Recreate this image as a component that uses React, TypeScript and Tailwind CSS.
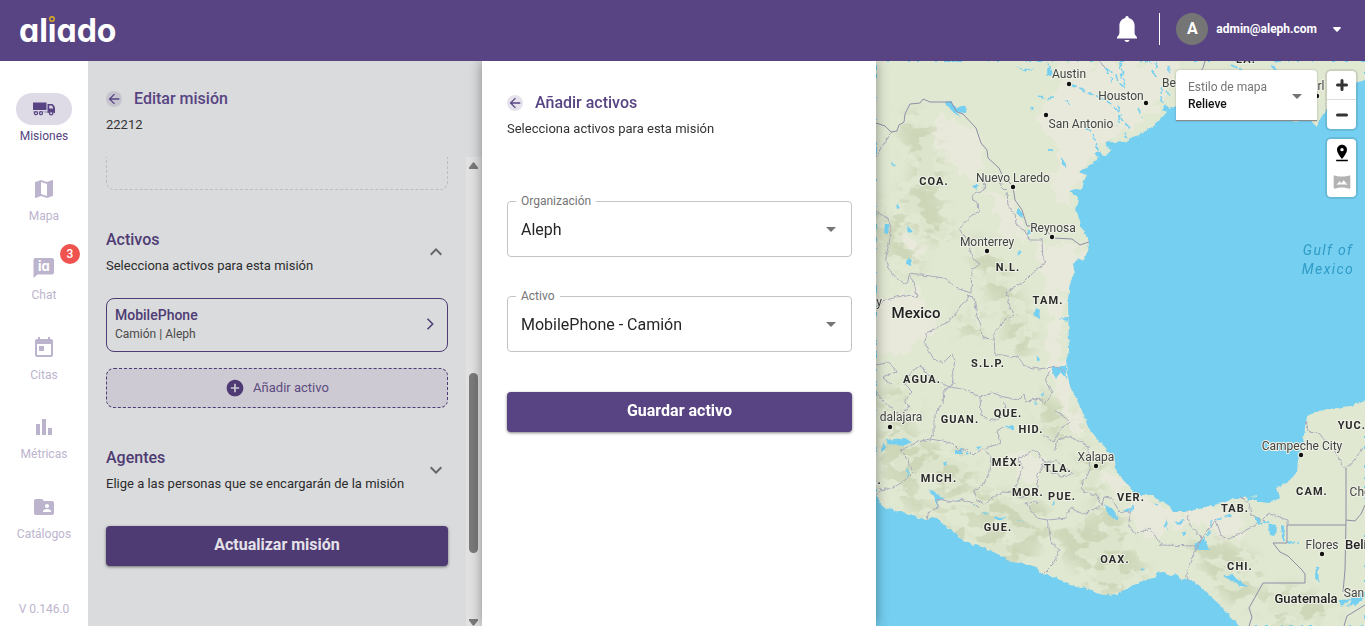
import React, { useState } from 'react'
import {
  MdAddCircle,
  MdArrowBack,
  MdArrowDropDown,
  MdBarChart,
  MdExpandLess,
  MdExpandMore,
  MdFolderShared,
  MdMap,
  MdPinDrop,
  MdToday,
  MdVrpano
} from 'react-icons/md'

const TruckIcon = () => (
  <svg viewBox="0 0 24 16" className="w-6 h-4" fill="currentColor">
    <path d="M1 1.500h13.500V9H1z" />
    <path d="M15.500 3h4.200c1.600 0 3.300 2.600 3.300 4.600V12h-1.200a2.800 2.800 0 0 0-5.200 0h-1.100zm1.800 1.400v3h4c-.3-1.500-1.200-3-2-3z" fillRule="evenodd" />
    <path d="M1 10h14.500v2H13a2.400 2.400 0 0 0-3.800-.8 2.400 2.400 0 0 0-3.400 0A2.400 2.400 0 0 0 2 12H1z" opacity="0.3" />
    <g fill="none" stroke="currentColor" strokeWidth="1.300">
      <circle cx="4" cy="12.200" r="1.500" />
      <circle cx="9" cy="12.200" r="1.500" />
      <circle cx="19.200" cy="12.200" r="1.700" />
    </g>
  </svg>
)

const ChatIcon = () => (
  <svg viewBox="0 0 22 20" className="w-[22px] h-5" fill="currentColor">
    <path d="M2 0h17a2 2 0 0 1 2 2v12.500a2 2 0 0 1-2 2H4.500L.5 20V2A2 2 0 0 1 2 0z" />
    <text x="10.800" y="12.500" textAnchor="middle" className="fill-white font-['Inter',sans-serif] text-[13px] font-bold [font-feature-settings:'cv11']">ia</text>
  </svg>
)

const BellIcon = () => (
  <svg viewBox="0 0 20 26" className="w-5 h-[26px]" fill="currentColor">
    <path d="M10 0c1.100 0 1.700.8 1.700 1.900 3.600.9 5.900 3.700 5.900 7.600v7.500c0 1.600.9 2.500 2.400 4.300V22.500H0v-1.200C1.500 19.500 2.400 18.600 2.400 17V9.500c0-3.900 2.300-6.700 5.900-7.600C8.300.8 8.900 0 10 0z" />
    <path d="M7.500 24h5c-.3 1.200-1.300 2-2.500 2s-2.200-.8-2.500-2z" />
  </svg>
)

const navItems = [
  { id: 'misiones', label: 'Misiones', icon: <TruckIcon /> },
  { id: 'mapa', label: 'Mapa', icon: <MdMap className="w-6 h-6" /> },
  { id: 'chat', label: 'Chat', icon: <ChatIcon />, badge: 3 },
  { id: 'citas', label: 'Citas', icon: <MdToday className="w-6 h-6" /> },
  { id: 'metricas', label: 'Métricas', icon: <MdBarChart className="w-6 h-6" /> },
  { id: 'catalogos', label: 'Catálogos', icon: <MdFolderShared className="w-6 h-6" /> }
]

const Header = () => (
  <header className="h-[61px] shrink-0 bg-[#584482] text-white flex items-center justify-between pl-[19px] pr-6">
    <a href="#" className="font-['Inter',sans-serif] text-[32px] leading-10 font-bold [font-feature-settings:'cv11']">
      al
      <span className="relative">
        i
        <svg viewBox="0 0 8 8" className="absolute top-1 left-0 w-2 h-2">
          <rect width="8" height="8" fill="#584482" />
          <circle cx="4" cy="4" r="2.200" fill="none" stroke="#e0b020" strokeWidth="1.400" />
        </svg>
      </span>
      ado
    </a>
    <div className="flex items-center pb-[3px]">
      <button aria-label="Notificaciones">
        <BellIcon />
      </button>
      <div className="w-px h-8 bg-white ml-[22px] mr-4" />
      <button className="flex items-center">
        <span className="w-8 h-8 rounded-full bg-[#757575] flex items-center justify-center text-base font-bold mr-2">A</span>
        <span className="text-xs font-bold mr-4">admin@aleph.com</span>
        <svg viewBox="0 0 8 5" className="w-2 h-[5px]" fill="currentColor">
          <path d="M.8 0h6.400c.7 0 1 .7.500 1.200L4.600 4.600a.8.8 0 0 1-1.200 0L.3 1.200C-.2.7.1 0 .8 0z" />
        </svg>
      </button>
    </div>
  </header>
)

const Sidebar = ({ active }: { active: string }) => (
  <aside className="w-[88px] shrink-0 bg-white flex flex-col items-center pt-8 pb-[7px]">
    <nav className="flex-1 flex flex-col justify-between mb-[54px]">
      {navItems.map((item) => (
        <a
          key={item.id}
          href={`#${item.id}`}
          className={`flex flex-col items-center text-xs leading-[22px] ${
            item.id === active ? 'text-[#584482]' : 'text-[#bcb4cd]'
          }`}
        >
          <span
            className={`relative w-14 h-8 rounded-full flex items-center justify-center ${
              item.id === active ? 'bg-[#dedae6]' : ''
            }`}
          >
            {item.icon}
            {item.badge && (
              <span className="absolute -top-2 -right-2 w-5 h-5 rounded-full bg-[#ef5350] text-white text-xs font-medium leading-5 text-center">
                {item.badge}
              </span>
            )}
          </span>
          {item.label}
        </a>
      ))}
    </nav>
    <span className="text-xs leading-5 text-[#bcb4cd]">V 0.146.0</span>
  </aside>
)

const PanelTitle = ({ title, subtitle }: { title: string; subtitle: string }) => (
  <div>
    <div className="flex items-center gap-3 h-6">
      <button aria-label="Regresar" className="w-4 h-4 rounded-full bg-[#584482]/15 flex items-center justify-center text-[#584482]">
        <MdArrowBack className="w-4 h-4" />
      </button>
      <h2 className="text-base leading-6 font-medium text-[#584482]">{title}</h2>
    </div>
    <p className="mt-1 text-[13px] leading-5 text-[#333]">{subtitle}</p>
  </div>
)

interface SectionProps {
  title: string
  subtitle: string
  open: boolean
  onToggle: () => void
}

const SectionHeader = ({ title, subtitle, open, onToggle }: SectionProps) => (
  <button onClick={onToggle} aria-expanded={open} className="w-full flex items-center justify-between text-left mt-[38px]">
    <span>
      <span className="block text-base leading-6 font-medium text-[#4e3b73]">{title}</span>
      <span className="block mt-1 text-[13px] leading-5 text-[#2c2c2c]">{subtitle}</span>
    </span>
    {open ? <MdExpandLess className="w-6 h-6 text-[#666]" /> : <MdExpandMore className="w-6 h-6 text-[#666]" />}
  </button>
)

const EditPanel = () => {
  const [assetsOpen, setAssetsOpen] = useState(true)
  const [agentsOpen, setAgentsOpen] = useState(false)

  return (
    <section className="w-[394px] shrink-0 bg-[#dadbdd] flex flex-col">
      <div className="px-[18px] pt-[26px] pb-[22px]">
        <PanelTitle title="Editar misión" subtitle="22212" />
      </div>
      <div className="flex-1 min-h-0 flex">
        <div className="flex-1 px-[18px] overflow-hidden">
          <div className="h-[33px] border border-t-0 border-dashed border-[#bdbdbf] rounded-b-lg" />

          <SectionHeader
            title="Activos"
            subtitle="Selecciona activos para esta misión"
            open={assetsOpen}
            onToggle={() => setAssetsOpen(!assetsOpen)}
          />
          {assetsOpen && (
            <>
              <button className="mt-[22px] w-full flex items-center justify-between border border-[#4e3b73] rounded-lg pl-2 pr-[13px] pt-[6px] pb-2 text-left">
                <span>
                  <span className="block text-sm leading-5 font-medium text-[#4e3b73]">MobilePhone</span>
                  <span className="block text-xs leading-[18px] text-[#4a4a4a]">Camión | Aleph</span>
                </span>
                <svg viewBox="0 0 8 12" className="w-2 h-3" fill="none" stroke="#4e3b73" strokeWidth="1.500">
                  <path d="M1.500.8 6.700 6l-5.200 5.200" />
                </svg>
              </button>
              <button className="mt-4 w-full h-10 flex items-center justify-center gap-2 border border-dashed border-[#4e3b73] rounded-lg bg-[#cdcad3] pb-px text-[13px] text-[#5d4b80]">
                <MdAddCircle className="w-5 h-5 text-[#4e3b73]" />
                Añadir activo
              </button>
            </>
          )}

          <SectionHeader
            title="Agentes"
            subtitle="Elige a las personas que se encargarán de la misión"
            open={agentsOpen}
            onToggle={() => setAgentsOpen(!agentsOpen)}
          />

          <button className="mt-8 w-full h-10 pb-0.5 rounded bg-[#4e3b73] text-[#e4e2e8] text-base font-bold shadow-[0_1px_3px_rgba(0,0,0,0.5)]">
            Actualizar misión
          </button>
        </div>

        {/* Scrollbar */}
        <div className="w-4 shrink-0 bg-[#e2e2e2] flex flex-col items-start justify-between pl-[3px] pt-[5px]">
          <svg viewBox="0 0 9 7" className="w-[9px] h-[7px]" fill="#7a7a7a">
            <path d="M3.500 1 0 5.500V7h9V5.500L5.500 1c-.5-.9-1.500-.9-2 0z" />
          </svg>
          <div className="flex-1 w-[9px] pt-[204px] pb-[66px] flex flex-col">
            <div className="flex-1 rounded-full bg-[#7a7a7a]" />
          </div>
          <svg viewBox="0 0 9 7" className="w-[9px] h-[7px]" fill="#7a7a7a">
            <path d="M3.500 6 0 1.500V0h9v1.500L5.500 6c-.5.9-1.500.9-2 0z" />
          </svg>
        </div>
      </div>
    </section>
  )
}

const OutlinedSelect = ({ id, label, options }: { id: string; label: string; options: string[] }) => (
  <div className="relative mt-[39px] h-14 border border-[#c4c4c4] rounded">
    <label htmlFor={id} className="absolute -top-[9px] left-2 px-[5px] bg-white text-xs leading-4 text-[#757575]">
      {label}
    </label>
    <select id={id} className="w-full h-full appearance-none bg-transparent pt-0.5 pl-[13px] pr-8 text-base text-[#262626]">
      {options.map((option) => (
        <option key={option}>{option}</option>
      ))}
    </select>
    <MdArrowDropDown className="absolute top-[15px] right-2 w-6 h-6 text-[#757575] pointer-events-none" />
  </div>
)

const AddAssetPanel = () => (
  <section className="relative z-10 w-[394px] shrink-0 bg-white pl-[25px] pr-6 pt-[30px] shadow-[0_0_12px_rgba(0,0,0,0.4)]">
    <PanelTitle title="Añadir activos" subtitle="Selecciona activos para esta misión" />
    <div className="mt-[62px]">
      <OutlinedSelect id="organizacion" label="Organización" options={['Aleph']} />
      <OutlinedSelect id="activo" label="Activo" options={['MobilePhone - Camión']} />
    </div>
    <button className="mt-10 w-full h-10 pb-0.5 rounded bg-[#584482] text-white text-base font-bold shadow-[0_1px_3px_rgba(0,0,0,0.5)]">
      Guardar activo
    </button>
  </section>
)

const land =
  'M876 61H1365V80L1352 84 1340 92 1330 104 1322 116 1316 126 1308 118 1296 122 1282 119 1262 112 1240 109 1215 112 1190 110 1176 107 1169 109 1165 104 1162 110 1167 112 1158 122 1152 127 1143 133 1134 137 1123 142 1114 143 1110 140 1105 143 1108 148 1112 151 1105 157 1098 150 1094 154 1099 158 1093 163 1087 167 1078 172 1087 175 1084 181 1082 190 1075 189 1069 191 1075 196 1078 197 1077 203 1075 210 1079 218 1081 226 1085 233 1089 242 1088 252 1083 261 1078 258 1073 264 1074 272 1070 280 1068 300 1069 350 1066 360 1067 373 1070 387 1077 400 1083 413 1088 427 1098 440 1106 448 1115 462 1117 473 1130 488 1137 495 1153 495 1160 501 1167 503 1173 512 1187 512 1210 506 1226 502 1233 498 1244 498 1257 495 1257 502 1260 502 1270 503 1280 497 1277 488 1290 480 1297 472 1298 460 1303 442 1305 428 1307 417 1312 413 1323 410 1350 406 1365 400V626H1239L1220 605 1200 587 1193 582 1187 578 1182 580 1175 574 1170 576 1162 572 1157 573 1153 578 1142 581 1130 587 1118 594 1105 595 1096 593 1087 588 1070 585 1054 577 1043 574 1033 566 1020 563 1007 561 1004 557 985 548 972 544 960 538 956 533 947 527 937 518 931 517 926 520 903 513 883 507 876 495Z'

const countryBorders = [
  'M876 123 885 126 891 132 897 131 899 125 904 122 905 114 910 104 920 103 923 99 930 102 951 102 957 112 963 114 976 128 981 143 987 150 988 158 999 168 1003 177 1010 183 1013 187 1015 200 1022 210 1027 226 1036 226 1046 230 1053 238 1072 239 1080 245 1089 242',
  'M1346 525H1287V543H1273L1280 552 1288 556 1297 565 1302 570 1305 574V583H1263L1249 608 1252 617 1249 626',
  'M1346 520 1345 570 1343 592M1346 520 1355 521 1361 514 1365 505M1365 605 1347 616 1344 626M1346 520V469',
  'M1205 61 1203 68 1199 73'
]

const stateBorders = [
  'M891 132 883 145 876 156M876 212 888 218 891 228 889 245 885 257 888 268 898 280 907 284 910 273 922 275 945 278 956 288 971 293 972 270 980 264 972 258 968 242 959 228 973 215 979 212 978 202 971 199 974 193 984 190 985 180',
  'M1000 176 1001 186 1007 192 1008 206 1015 214 1016 224 1024 230 1030 240 1042 240 1043 260 1047 262 1032 273 1022 283 1006 292 1010 306 1013 315 1003 321 994 333 994 339 982 338 981 325 977 316 974 298 967 296',
  'M876 308 882 301 905 295 917 297 914 282 909 276M972 295 961 305 953 318 941 326 926 333 925 345 934 359 943 363 951 355 955 360 952 376 954 384 949 387 963 389 980 397 993 393 1004 397 1018 400 1024 394 1026 402 1038 398 1045 404 1052 393',
  'M994 339 995 354 1012 357 1018 356 1023 366 1039 369 1058 366 1065 372M949 387 941 383 928 375 921 365 911 372 905 385 912 392 905 400 909 407 900 414 890 408 880 397 876 392M949 387 944 390 943 403 934 417 934 433 930 439',
  'M1052 393 1045 380 1050 371M980 397 981 415 990 421 999 418 1007 407 1003 402M930 439 917 442 908 448 900 450 908 458 909 466 914 472 908 478 893 488 880 490 876 495M930 439 942 441 952 443 960 451 967 449 973 455 984 448 992 446 1001 443 997 431 1003 427M984 448 991 457 990 472 984 484 974 490 977 500 984 504 994 497 1003 492 1014 493 1018 480 1023 468 1018 459 1026 455 1032 450 1039 454 1046 464 1037 474 1038 490 1026 498 1015 494',
  'M927 519 929 511 938 508 938 499 952 502 964 500 973 503 978 508M1038 502 1026 503 1037 518 1047 520 1049 528 1051 542 1060 550 1053 564 1043 574M1049 520 1066 518 1070 508 1083 514 1092 510 1102 505 1096 495 1083 492 1082 482 1090 470 1088 446 1080 442 1068 436 1058 440 1055 450',
  'M1042 464 1056 461 1065 467 1073 474 1061 476 1051 472ZM1102 505 1104 497 1111 498 1120 512 1131 513 1128 524 1136 534 1150 528 1161 545 1197 546 1202 538 1190 525 1187 512M1197 546 1186 572 1189 583M1197 546 1208 530 1216 520 1221 535 1230 539 1244 531 1256 525 1265 516 1270 513 1287 520V525',
  'M1306 421 1308 431 1319 433 1325 441 1334 450 1342 464 1346 469 1355 459 1363 447M1054 410 1063 416 1070 422 1060 430 1054 442 1043 436M1240 497 1249 503 1251 515 1265 521',
  'M1100 61 1104 68M876 365 890 362 896 372 882 377 892 385'
]

// rough outlines of the mountain ranges, shaded by the relief filter
const ridges = [
  'M905 125 918 118 927 128 935 140 930 160 938 176 930 190 918 180 922 160 912 150Z',
  'M905 195 918 190 940 205 935 222 948 232 938 238 914 218Z',
  'M975 246 988 250 995 268 1010 290 1018 310 1028 320 1022 345 1010 340 1014 320 1000 300 988 280Z',
  'M880 210 895 215 905 240 915 265 900 262 890 240Z',
  'M1020 330 1028 332 1024 352 1018 348Z',
  'M884 440 900 430 920 445 950 455 970 470 960 490 930 480 905 480 890 465Z',
  'M890 480 930 515 950 520 975 535 1000 540 1030 555 1020 560 990 550 960 538 940 526Z',
  'M950 500 1010 500 1040 510 1045 535 1025 540 1000 525Z',
  'M1085 455 1100 465 1095 490 1085 480Z',
  'M1060 530 1085 525 1110 540 1135 560 1120 570 1090 560 1070 555Z',
  'M1085 575 1110 565 1140 570 1130 582 1105 590Z',
  'M1205 560 1225 568 1250 585 1240 600 1222 585Z',
  'M1195 548 1215 545 1240 556 1260 570 1245 575 1220 560Z',
  'M1262 600 1290 592 1330 610 1320 622 1280 618Z',
  'M1040 400 1060 412 1075 430 1068 438 1050 425Z',
  'M885 400 905 390 912 410 895 420Z',
  'M966 312 976 316 974 330 966 332Z',
  'M1100 510 1118 520 1120 545 1105 540Z'
]

const plains = [
  'M1060 61H1180L1160 105 1130 130 1100 145 1075 180 1072 210 1050 190 1060 150 1040 120 1055 90Z',
  'M1035 245 1085 250 1065 290 1060 350 1070 400 1085 440 1070 425 1055 390 1045 345 1048 300Z',
  'M940 110 975 135 985 160 975 185 945 160 930 130Z',
  'M1130 492 1170 510 1230 505 1245 530 1225 545 1190 520 1150 540 1125 520Z',
  'M876 300 920 290 935 330 900 360 876 350Z',
  'M1008 452 1040 455 1044 475 1020 480Z',
  'M900 236 935 245 925 256 905 250Z',
  'M985 190 1012 200 1030 240 1005 235Z',
  'M1100 470 1118 478 1128 495 1112 500Z'
]

const lakes = [
  'M944 102 951 101 956 109 966 106 965 113 957 112 960 116 954 113Z',
  'M892 161 895 165 893 168ZM896 203 900 208 897 209ZM885 224 889 225 888 234 884 233ZM908 227 912 230 910 234 907 231Z',
  'M973 185 979 185 977 189ZM1048 149 1054 149 1052 152 1047 151ZM1061 157 1066 163 1065 168 1062 165ZM1030 107 1033 109 1031 112Z',
  'M1048 61 1050 68 1053 74 1047 76ZM1016 67 1027 70 1034 68 1026 72ZM1018 208 1024 213 1023 218 1016 213ZM1028 230 1033 232 1026 236Z',
  'M1036 308 1040 310 1039 319 1034 316ZM1058 319 1068 318 1068 321ZM1037 356 1040 359 1037 362ZM1052 366 1066 366 1067 379 1060 372 1056 380 1053 373ZM1040 395 1044 392 1041 398ZM1034 401 1038 404 1035 405Z',
  'M907 258 913 260 911 266 906 264ZM1017 250 1021 251 1019 256ZM1004 427 1015 426 1012 430ZM885 440 905 438 911 442 904 446 888 444ZM883 442 886 448 882 453ZM907 468 910 472 908 476Z',
  'M955 450 964 449 961 454 955 454ZM966 452 970 453 966 455ZM975 447 982 446 978 450ZM943 462 948 463 944 466ZM929 489 938 495 945 498 938 501 938 509 935 500Z',
  'M950 500 962 500 960 501ZM972 502 978 508 974 505ZM981 512 989 513 984 514ZM994 518 1006 516 1002 520 996 520ZM1014 519 1026 522 1018 521ZM1104 504 1111 508 1118 517 1118 521 1109 516ZM1052 504 1055 500 1054 506Z',
  'M1195 543 1204 539 1210 550 1200 550 1194 549ZM1223 576 1232 574 1240 582 1249 587 1240 586 1230 580ZM1253 515 1263 523 1258 525ZM1268 523 1276 525 1275 536 1270 535ZM1281 525 1284 526 1285 542 1282 538ZM1164 526 1167 518 1168 530Z',
  'M1365 575 1365 592 1356 592 1351 600 1345 603 1342 606 1356 605 1365 598ZM1340 600 1352 599 1350 604 1341 607ZM1316 567 1318 567 1319 583 1315 578ZM1182 531 1187 532 1183 537ZM1173 522 1185 520 1180 525ZM1154 502 1158 504 1156 506Z',
  'M1110 447 1116 445 1116 453ZM1247 497 1258 496 1257 500 1248 500ZM1182 536 1186 529 1184 536ZM1140 570 1145 569 1143 572ZM1122 511 1130 508 1134 505 1128 512Z'
]

const rivers = [
  'M1070 84 1080 88 1088 93 1100 98 1112 104 1118 112 1122 120 1130 128',
  'M1107 70 1115 73 1118 82 1125 88 1121 62M1120 62 1121 80M1145 61 1155 62 1158 70',
  'M1038 96 1046 99 1054 98M1065 101 1072 106M1085 128 1092 132 1095 140 1098 150M1127 139 1124 130M1117 105 1121 116',
  'M1272 66 1278 74M1230 65 1242 70M1163 87 1160 95 1164 104M1105 68 1112 78 1109 85',
  'M1200 543 1210 533 1211 521 1220 519 1230 515 1233 503M1254 517 1266 523 1272 520M1287 543 1299 543M1130 512 1135 504',
  'M1152 70 1156 78M1168 66 1170 74M1138 108 1142 118M1120 116 1117 126M1166 90 1171 98'
]

const cities = [
  { name: 'Austin', x: 1069, y: 78, dot: [1069, 84] },
  { name: 'Houston', x: 1121, y: 100, dot: [1146, 103] },
  { name: 'San Antonio', x: 1081, y: 128, dot: [1046, 115] },
  { name: 'Nuevo Laredo', x: 1013, y: 182, dot: [1013, 187] },
  { name: 'Reynosa', x: 1053, y: 232, dot: [1052, 237] },
  { name: 'Monterrey', x: 987, y: 246, dot: [987, 251] },
  { name: 'dalajara', x: 901, y: 421, dot: [890, 427] },
  { name: 'Xalapa', x: 1096, y: 461, dot: [1096, 466] },
  { name: 'Campeche City', x: 1302, y: 450, dot: [1301, 455] },
  { name: 'Flores', x: 1322, y: 549, dot: [1322, 554] },
  { name: 'Be', x: 1169, y: 87, dot: [1190, 92] },
  { name: 'rl', x: 1321, y: 90, dot: [1317, 96] },
  { name: 'y', x: 879, y: 306, dot: [860, 310] },
  { name: 'Che', x: 1360, y: 496, dot: [1380, 500] },
  { name: 'San', x: 1354, y: 597, dot: [1390, 600] }
]

const states = [
  { name: 'LA.', x: 1246, y: 63 },
  { name: 'COA.', x: 934, y: 185 },
  { name: 'N.L.', x: 1008, y: 271 },
  { name: 'TAM.', x: 1048, y: 304 },
  { name: 'S.L.P.', x: 988, y: 367 },
  { name: 'AGUA.', x: 922, y: 383 },
  { name: 'GUAN.', x: 960, y: 423 },
  { name: 'QUE.', x: 1008, y: 417 },
  { name: 'HID.', x: 1031, y: 433 },
  { name: 'MÉX.', x: 1007, y: 466 },
  { name: 'TLA.', x: 1058, y: 472 },
  { name: 'MICH.', x: 939, y: 482 },
  { name: 'MOR.', x: 1028, y: 496 },
  { name: 'PUE.', x: 1062, y: 500 },
  { name: 'GUE.', x: 998, y: 531 },
  { name: 'VER.', x: 1131, y: 501 },
  { name: 'OAX.', x: 1115, y: 563 },
  { name: 'TAB.', x: 1235, y: 512 },
  { name: 'CHI.', x: 1240, y: 570 },
  { name: 'CAM.', x: 1312, y: 495 },
  { name: 'YUC.', x: 1352, y: 429 },
  { name: 'L.', x: 876, y: 484 }
]

const countries = [
  { name: 'Mexico', x: 916, y: 318, size: 'text-[15px]' },
  { name: 'Guatemala', x: 1306, y: 603, size: 'text-[13px]' },
  { name: 'Beli', x: 1356, y: 549, size: 'text-[13px]' }
]

const MapView = () => (
  <main className="relative flex-1 min-w-0 bg-[#75cff0] overflow-hidden">
    <svg
      viewBox="876 61 489 565"
      preserveAspectRatio="xMidYMid slice"
      className="w-full h-full font-['Roboto',sans-serif]"
      role="img"
      aria-label="Mapa"
    >
      <defs>
        <clipPath id="land">
          <path d={land} />
        </clipPath>
        <filter id="rough" x="-5%" y="-5%" width="110%" height="110%">
          <feTurbulence type="fractalNoise" baseFrequency="0.08" numOctaves="3" seed="4" />
          <feDisplacementMap in="SourceGraphic" scale="24" xChannelSelector="R" yChannelSelector="G" />
        </filter>
        <filter id="relief" x="-5%" y="-5%" width="110%" height="110%" colorInterpolationFilters="sRGB">
          <feTurbulence type="fractalNoise" baseFrequency="0.05 0.07" numOctaves="3" seed="11" />
          <feColorMatrix values="0 0 0 0 0.76  0 0 0 0 0.8  0 0 0 0 0.66  14 0 0 0 -6.9" result="folds" />
          <feGaussianBlur in="SourceAlpha" stdDeviation="6" result="mask" />
          <feComposite in="folds" in2="mask" operator="in" />
        </filter>
        <filter id="coast" x="-5%" y="-5%" width="110%" height="110%">
          <feTurbulence type="fractalNoise" baseFrequency="0.2" numOctaves="2" seed="2" />
          <feDisplacementMap in="SourceGraphic" scale="4" xChannelSelector="R" yChannelSelector="G" />
        </filter>
      </defs>

      <path d={land} fill="#e1e8d2" filter="url(#coast)" />
      <g clipPath="url(#land)">
        <g filter="url(#rough)">
          {plains.map((d) => (
            <path key={d} d={d} fill="#e8e9da" />
          ))}
          {ridges.map((d) => (
            <path key={d} d={d} fill="#d8e0c6" opacity="0.5" />
          ))}
        </g>
        <g filter="url(#relief)" opacity="0.55">
          {ridges.map((d) => (
            <path key={d} d={d} stroke="#000" strokeWidth="16" strokeLinejoin="round" />
          ))}
        </g>
      </g>

      <g filter="url(#coast)">
        {lakes.map((d) => (
          <path key={d} d={d} fill="#75cff0" />
        ))}
        {rivers.map((d) => (
          <path key={d} d={d} fill="none" stroke="#75cff0" strokeWidth="1.500" strokeDasharray="7 3" />
        ))}
        {stateBorders.map((d) => (
          <path key={d} d={d} fill="none" stroke="#a9aabc" />
        ))}
      </g>
      {countryBorders.map((d) => (
        <path key={d} d={d} fill="none" stroke="#8f8ea6" />
      ))}

      <g textAnchor="middle" stroke="#eef1e6" strokeWidth="2" strokeLinejoin="round" paintOrder="stroke">
        {cities.map((c) => (
          <g key={c.name}>
            <circle cx={c.dot[0]} cy={c.dot[1]} r="2.200" fill="#111" />
            <text x={c.x} y={c.y} fill="#444" className="text-xs">{c.name}</text>
          </g>
        ))}
        {states.map((s) => (
          <text key={s.name} x={s.x} y={s.y} fill="#2b2b2b" className="text-[11px] font-bold tracking-widest">{s.name}</text>
        ))}
        {countries.map((c) => (
          <text key={c.name} x={c.x} y={c.y} fill="#222" className={`${c.size} font-medium`}>{c.name}</text>
        ))}
      </g>
      <g textAnchor="middle" fill="#2f9bc6" className="text-sm italic tracking-widest">
        <text x="1328" y="255">Gulf of</text>
        <text x="1328" y="274">Mexico</text>
      </g>
    </svg>

    <div className="absolute top-[9px] right-12 w-[141px] h-[51px] bg-white rounded-t border-b border-[#8a8a8a] shadow-[0_0_2px_rgba(0,0,0,0.3)]">
      <label htmlFor="estilo" className="block pl-3 pt-[9px] text-xs leading-4 text-[#757575]">
        Estilo de mapa
      </label>
      <select id="estilo" className="block w-full appearance-none bg-transparent pl-3 text-xs leading-[18px] font-medium text-[#111]">
        <option>Relieve</option>
      </select>
      <MdArrowDropDown className="absolute top-[14px] right-2 w-6 h-6 text-[#757575] pointer-events-none" />
    </div>

    <div className="absolute top-[10px] right-[9px] w-[29px] flex flex-col gap-[10px]">
      <div className="bg-white rounded shadow-[0_0_0_2px_rgba(0,0,0,0.1)] divide-y divide-[#ddd]">
        <button aria-label="Acercar" className="w-full h-[29px] flex items-center justify-center">
          <svg viewBox="0 0 12 12" className="w-3 h-3" stroke="#333" strokeWidth="3" strokeLinecap="round">
            <path d="M6 1.500v9M1.500 6h9" />
          </svg>
        </button>
        <button aria-label="Alejar" className="w-full h-[29px] flex items-center justify-center">
          <svg viewBox="0 0 12 12" className="w-3 h-3" stroke="#333" strokeWidth="3" strokeLinecap="round">
            <path d="M1.500 6h9" />
          </svg>
        </button>
      </div>
      <div className="bg-white rounded shadow-[0_0_0_2px_rgba(0,0,0,0.1)]">
        <button aria-label="Marcador" className="w-full h-[29px] pb-0.5 flex items-center justify-center">
          <MdPinDrop className="w-5 h-5 text-black" />
        </button>
        <button aria-label="Panorama" className="w-full h-[29px] pb-0.5 flex items-center justify-center">
          <MdVrpano className="w-5 h-5 text-[#b3b3b3]" />
        </button>
      </div>
    </div>
  </main>
)

const App: React.FC = () => {
  return (
    <div className="h-screen flex flex-col overflow-hidden font-['Roboto',sans-serif]">
      <Header />
      <div className="flex-1 min-h-0 flex overflow-hidden">
        <Sidebar active="misiones" />
        <EditPanel />
        <AddAssetPanel />
        <MapView />
      </div>
    </div>
  )
}

export default App
